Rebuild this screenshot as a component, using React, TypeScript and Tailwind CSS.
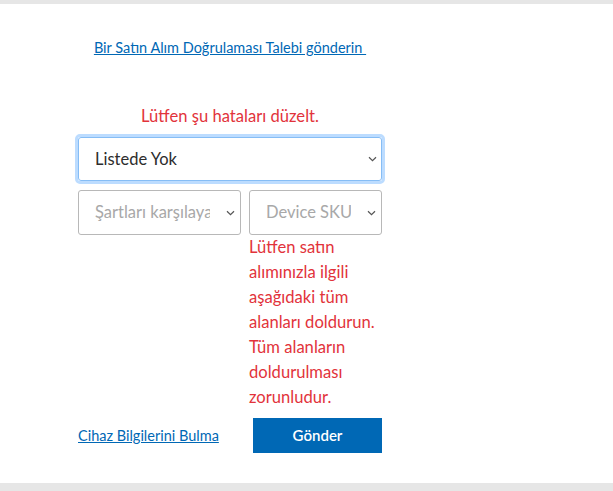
function Chevron() {
  return (
    <svg width="9" height="6" viewBox="0 0 9 6" className="shrink-0">
      <path d="M1 1.2 L4.5 4.6 L8 1.2" fill="none" stroke="#555" strokeWidth="1.2" />
    </svg>
  );
}

function FakeSelect({ label, placeholder, className }: { label: string; placeholder?: boolean; className: string }) {
  return (
    <div
      className={`flex items-center justify-between gap-4 rounded-[3px] border border-[#b8b8b8] bg-white pl-4 pr-[5px] ${className}`}
    >
      <span className={`overflow-hidden whitespace-nowrap text-[16.5px] ${placeholder ? 'text-[#a8a8a8]' : 'text-[#2d2d2d]'}`}>
        {label}
      </span>
      <Chevron />
    </div>
  );
}

export default function App() {
  return (
    <div className="min-h-[491px] bg-[#e6e6e6] pt-1 pb-2 font-['Lato',sans-serif]">
      <div className="h-[479px] bg-white">
        <div className="ml-[78px] flex w-[304px] flex-col">
          {/* request link */}
          <div className="mt-[31px] text-center">
            <a href="#" className="text-[14.5px] leading-[20px] text-[#0068b5] underline">
              Bir Satın Alım Doğrulaması Talebi gönderin&nbsp;
            </a>
          </div>

          <p className="mt-[45px] text-center text-[16.6px] leading-[24px] text-[#e2333b]">Lütfen şu hataları düzelt.</p>

          {/* product select (focused) */}
          <div className="mt-[6px] rounded-[5px] border-[3px] border-[#bcdcff] -mx-[3px]">
            <div className="flex h-[44px] items-center justify-between rounded-[3px] border border-[#86bdf5] bg-white pl-4 pr-[4px]">
              <span className="text-[16.5px] text-[#2d2d2d]">Listede Yok</span>
              <Chevron />
            </div>
          </div>

          <div className="mt-[6px] flex gap-2">
            <FakeSelect label="Şartları karşılayan" placeholder className="h-[45px] w-[163px]" />
            <div className="flex w-[133px] flex-col">
              <FakeSelect label="Device SKU" placeholder className="h-[45px] w-[133px]" />
              <p className="text-[16.6px] leading-[25px] text-[#e2333b]">
                Lütfen satın alımınızla ilgili aşağıdaki tüm alanları doldurun. Tüm alanların doldurulması zorunludur.
              </p>
            </div>
          </div>

          <div className="mt-2 flex items-center justify-between">
            <a href="#" className="text-[14.5px] text-[#0068b5] underline">
              Cihaz Bilgilerini Bulma
            </a>
            <button className="h-[35px] w-[129px] bg-[#0068b5] text-[15px] font-semibold text-white">Gönder</button>
          </div>
        </div>
      </div>
    </div>
  );
}
